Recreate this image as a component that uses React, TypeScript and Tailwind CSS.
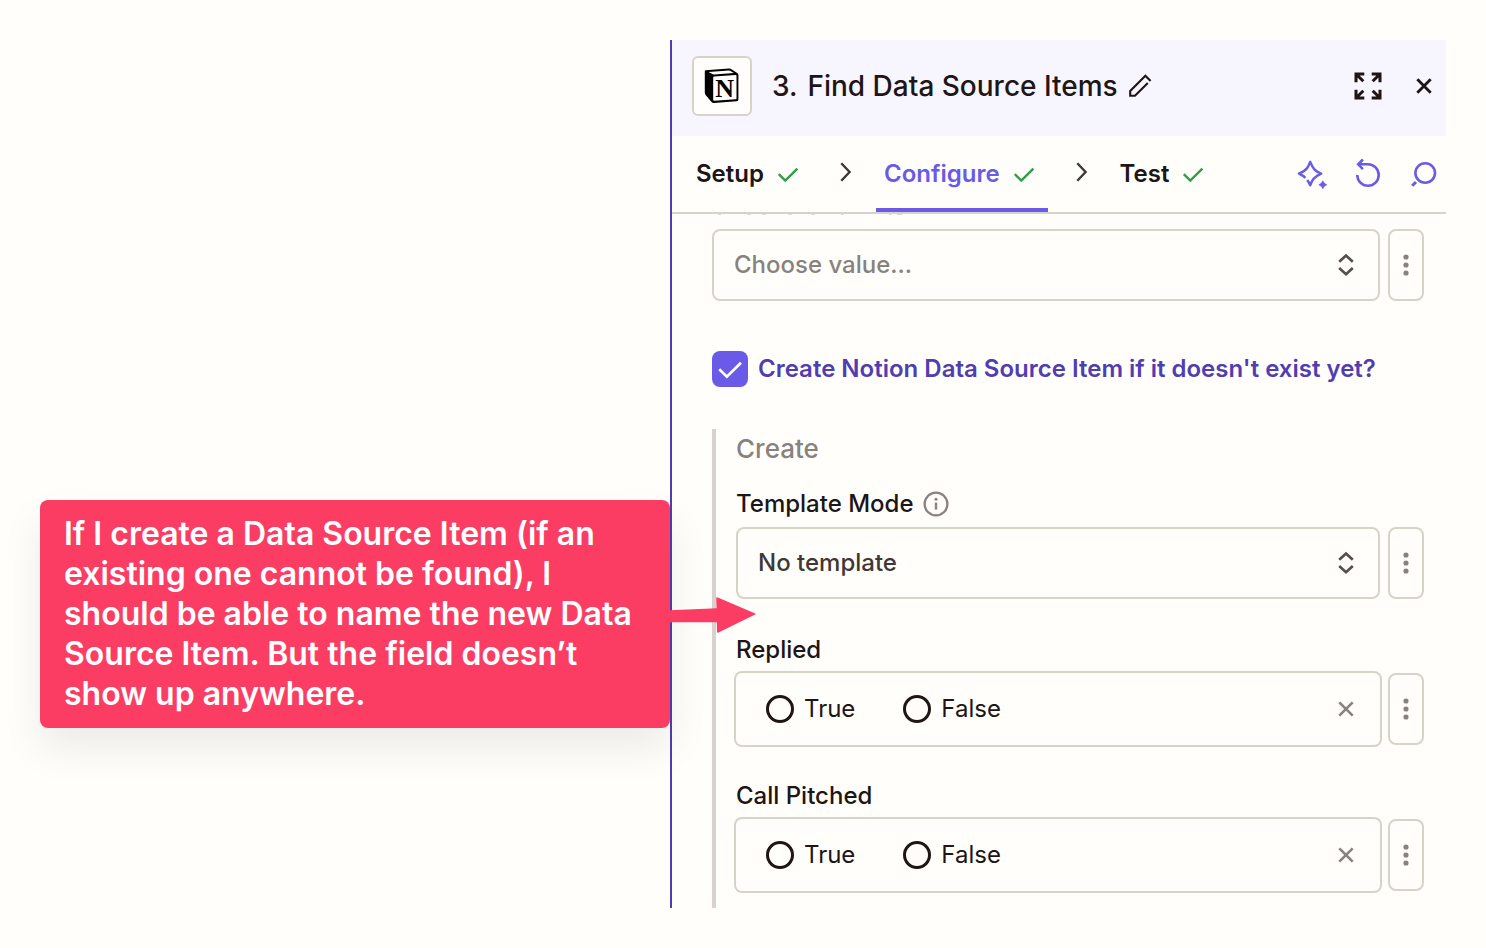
import type { ReactNode } from "react";

function NotionLogo() {
  return (
    <svg viewBox="0 0 36 36" className="size-9" aria-hidden="true">
      <path
        d="M1.6 2.3 L25 .6 Q26.6 .5 27.8 1.4 L33.6 5.3 Q34.4 5.9 34.4 7 V31.4 Q34.4 33.1 32.7 33.2 L10 34.9 Q8.3 35 7.3 33.7 L1.6 26.9 Q.8 25.8 .8 24.6 V3.4 Q.8 2.4 1.6 2.3 Z"
        fill="#000"
      />
      <path d="M4.6 4 L24.8 2.5 Q25.8 2.4 26.5 2.9 L29.8 5 L10.3 6.4 Q9 6.5 8 5.8 Z" fill="#fffefb" />
      <path d="M9.2 9.6 Q9.2 8.6 10.2 8.5 L31.5 7.1 Q32.5 7 32.5 8 V30.3 Q32.5 31.2 31.6 31.3 L10.3 32.7 Q9.2 32.7 9.2 31.7 Z" fill="#fffefb" />
      <text x="20.6" y="29" textAnchor="middle" fontFamily="Liberation Serif, serif" fontWeight="700" fontSize="26" fill="#000">
        N
      </text>
    </svg>
  );
}

function PencilIcon() {
  return (
    <svg viewBox="0 0 24 24" className="size-6" fill="none" stroke="#201515" strokeWidth="2.1" aria-hidden="true">
      <path d="M19.8 8.9 L7 21.7 H2.2 V16.9 L17.4 1.8 L22.6 7" />
    </svg>
  );
}

function ExpandIcon() {
  return (
    <svg viewBox="0 0 28 28" className="size-7" fill="none" stroke="#201515" strokeWidth="3" aria-hidden="true">
      <path d="M10.3 2 H2 V10.3 M2 2 L9.3 9.3" />
      <path d="M17.7 2 H26 V10.3 M26 2 L18.7 9.3" />
      <path d="M10.3 26 H2 V17.7 M2 26 L9.3 18.7" />
      <path d="M17.7 26 H26 V17.7 M26 26 L18.7 18.7" />
    </svg>
  );
}

function CloseIcon({ className }: { className: string }) {
  return (
    <svg viewBox="0 0 16 16" className={className} fill="none" stroke="currentColor" aria-hidden="true">
      <path d="M1.3 1.3 L14.7 14.7 M14.7 1.3 L1.3 14.7" />
    </svg>
  );
}

function CheckIcon({ className }: { className: string }) {
  return (
    <svg viewBox="0 0 24 24" className={className} fill="none" stroke="currentColor" aria-hidden="true">
      <path d="M2.8 12.2 L9.3 18.6 L21.4 6.6" />
    </svg>
  );
}

function StepArrow() {
  return (
    <div className="flex w-16 items-center justify-center pl-1">
      <svg viewBox="0 0 12 20" className="mb-1 h-5 w-3" fill="none" stroke="#413735" strokeWidth="2.4" aria-hidden="true">
        <path d="M1.3 1.2 L9.6 10 L1.3 18.8" />
      </svg>
    </div>
  );
}

function SparkleIcon() {
  return (
    <svg viewBox="0 0 32 32" className="size-8" fill="none" stroke="#695be8" strokeWidth="2.5" strokeLinejoin="round" aria-hidden="true">
      <path d="M9.4 19.9 C8.3 18.6 6.4 17.2 3 15.6 C7.2 13.9 9.6 12.2 11.2 10 C12.5 8.2 13.2 6.4 14.2 3.9 C15.6 7.4 16.8 9.7 18.6 11.6 C20.3 13.4 22.4 14.5 25.2 15.6 C21.6 17.2 19.2 18.8 17.4 21 C16 22.8 15.1 24.8 14.2 27.2 C13.2 25 12.4 23.6 11.2 22" />
      <path d="M26.8 22.8 Q27.8 25.7 30.8 26.8 Q27.8 27.9 26.8 30.8 Q25.8 27.9 22.8 26.8 Q25.8 25.7 26.8 22.8 Z" fill="#695be8" strokeWidth="0.6" />
    </svg>
  );
}

function UndoIcon() {
  return (
    <svg viewBox="0 0 32 32" className="size-8" fill="none" stroke="#695be8" strokeWidth="2.6" aria-hidden="true">
      <path d="M5.3 17 A10.7 10.7 0 1 0 16 6.3 H6.4" />
      <path d="M10.9 1.5 L6.2 6.3 L10.9 11.1" />
    </svg>
  );
}

function SearchIcon() {
  return (
    <svg viewBox="0 0 32 32" className="size-8" fill="none" stroke="#695be8" strokeWidth="2.6" aria-hidden="true">
      <circle cx="17.2" cy="15" r="9.8" />
      <path d="M8 24 L4.2 27.8" strokeWidth="3" />
    </svg>
  );
}

function InfoIcon() {
  return (
    <svg viewBox="0 0 26 26" className="size-[26px]" fill="none" stroke="#88827e" strokeWidth="2.3" aria-hidden="true">
      <circle cx="13" cy="13" r="11.4" />
      <path d="M13 11.6 V18.6" strokeWidth="2.4" />
      <circle cx="13" cy="8.2" r="1.5" fill="#88827e" stroke="none" />
    </svg>
  );
}

function SortIcon() {
  return (
    <svg viewBox="0 0 24 24" className="pointer-events-none absolute top-6 right-[22px] size-6" fill="none" stroke="#574e4c" strokeWidth="2.7" aria-hidden="true">
      <path d="M5.2 8.8 L12 2.6 L18.8 8.8 M5.2 15 L12 21.2 L18.8 15" />
    </svg>
  );
}

function MoreButton() {
  return (
    <button type="button" aria-label="More options" className="flex h-[72px] w-9 shrink-0 items-center justify-center rounded-lg border-2 border-[#d7d3c9]">
      <svg viewBox="0 0 6 22" className="h-[22px] w-1.5" fill="#88827e" aria-hidden="true">
        <circle cx="3" cy="3" r="2.6" />
        <circle cx="3" cy="11" r="2.6" />
        <circle cx="3" cy="19" r="2.6" />
      </svg>
    </button>
  );
}

function SelectRow({ id, label, value, tone }: { id: string; label?: string; value: string; tone: string }) {
  return (
    <div className="flex gap-2">
      <div className="relative min-w-0 flex-1">
        <select id={id} aria-label={label} className={`h-[72px] w-full appearance-none rounded-lg border-2 border-[#d7d3c9] bg-transparent px-5 font-medium ${tone}`}>
          <option>{value}</option>
        </select>
        <SortIcon />
      </div>
      <MoreButton />
    </div>
  );
}

function Radio({ name, label }: { name: string; label: string }) {
  return (
    <label className="flex items-center gap-2.5">
      <input type="radio" name={name} className="size-7 appearance-none rounded-full border-3 border-[#201515] checked:border-8" />
      <span className="text-[#201515]">{label}</span>
    </label>
  );
}

function BooleanField({ name, label }: { name: string; label: string }) {
  return (
    <fieldset className="mt-[34px]">
      <legend className="h-10 pt-px leading-8 font-medium text-[#201515]">{label}</legend>
      <div className="flex gap-2">
        <div className="flex h-[72px] min-w-0 flex-1 items-center gap-12 rounded-md pr-[18px] pl-[30px] ring-2 ring-[#d7d3c9]">
          <Radio name={name} label="True" />
          <Radio name={name} label="False" />
          <button type="button" aria-label={`Clear ${label}`} className="ml-auto flex size-8 items-center justify-center text-[#88827e]">
            <CloseIcon className="size-4 stroke-[2.6]" />
          </button>
        </div>
        <MoreButton />
      </div>
    </fieldset>
  );
}

function Tab({ active, children }: { active?: boolean; children: ReactNode }) {
  return (
    <button
      type="button"
      className={
        active
          ? "flex items-center gap-3 border-y-4 border-t-transparent border-b-[#695be8] pr-3 pl-2 font-semibold text-[#695be8]"
          : "flex items-center gap-3 border-y-4 border-transparent pr-3 pl-2 font-semibold text-[#201515]"
      }
    >
      {children}
      <CheckIcon className="size-6 stroke-[2.4] text-[#2f9e44]" />
    </button>
  );
}

export default function App() {
  return (
    <main className="flex min-h-screen bg-[#fffefb] p-10 font-['Inter',sans-serif] text-[24px] leading-8">
      <div className="w-[630px] shrink-0">
        <aside className="relative z-10 mt-[460px] rounded-lg bg-[#fc3d63] py-[14px] pr-4 pl-6 text-[32px] leading-10 font-semibold text-white shadow-[0_20px_40px_rgba(0,0,0,0.08)]">
          <p>
            If I create a Data Source Item (if an existing one cannot be found), I should be able to name the new Data Source Item. But the field doesn’t show up anywhere.
          </p>
          <svg viewBox="0 0 86 36" className="absolute top-[97px] left-full h-9 w-[86px]" fill="#fc3d63" aria-hidden="true">
            <path d="M0 13.2 L46.5 11.2 L46.2 1 Q46.3 0 47.3 .3 L85.2 16.6 Q86 17 85.2 17.5 L48 35.8 Q47 36 47 35 L46.8 25.2 L0 25.2 Z" />
          </svg>
        </aside>
      </div>

      <section className="min-w-0 flex-1 self-start border-l-2 border-[#503eb0]">
        <header className="flex h-24 items-center bg-[#f7f5fd] pr-1.5 pb-1 pl-5">
          <div className="flex size-[60px] items-center justify-center rounded-md border-2 border-[#d7d3c9] bg-[#fffefb]">
            <NotionLogo />
          </div>
          <h1 className="ml-5 flex gap-[10px] text-[28px] leading-9 font-medium text-[#201515]">
            <span>3.</span>
            <span>Find Data Source Items</span>
          </h1>
          <button type="button" aria-label="Rename step" className="ml-2.5">
            <PencilIcon />
          </button>
          <button type="button" aria-label="Expand panel" className="ml-auto flex size-8 items-center justify-center">
            <ExpandIcon />
          </button>
          <button type="button" aria-label="Close panel" className="ml-6 flex size-8 items-center justify-center text-[#201515]">
            <CloseIcon className="size-4 stroke-[2.8]" />
          </button>
        </header>

        <nav className="flex h-[78px] border-b-2 border-[#d7d3c9] pr-1.5 pl-4">
          <Tab>Setup</Tab>
          <StepArrow />
          <Tab active>Configure</Tab>
          <StepArrow />
          <Tab>Test</Tab>
          <div className="ml-auto flex items-center gap-6">
            <button type="button" aria-label="Ask AI">
              <SparkleIcon />
            </button>
            <button type="button" aria-label="Undo">
              <UndoIcon />
            </button>
            <button type="button" aria-label="Search">
              <SearchIcon />
            </button>
          </div>
        </nav>

        <div className="pr-[22px] pl-10">
          <svg viewBox="0 0 200 15" className="h-[15px] w-[200px]" stroke="#dcd9d2" aria-hidden="true">
            <path d="M6 .5 h3 M35 .5 h4 M50 .5 h4 M76 .5 h4 M99 .5 h4 M129 .5 h3 M177 .5 h3 M185 .5 h5" />
          </svg>
          <SelectRow id="value" label="Value" value="Choose value..." tone="text-[#88827e]" />

          <label className="mt-[50px] flex items-center gap-2.5">
            <span className="grid size-9 shrink-0 place-items-center">
              <input type="checkbox" defaultChecked className="col-start-1 row-start-1 size-9 appearance-none rounded-lg bg-[#695be8]" />
              <CheckIcon className="pointer-events-none col-start-1 row-start-1 size-7 stroke-[2.3] text-white" />
            </span>
            <span className="font-semibold text-[#503eb0]">Create Notion Data Source Item if it doesn't exist yet?</span>
          </label>

          <div className="mt-[42px] border-l-4 border-[#d9d1cb] pt-1 pb-[17px] pl-5">
            <h2 className="text-[26px] leading-8 font-medium text-[#88827e]">Create</h2>
            <div className="mt-[22px] flex h-10 items-center gap-2.5 pb-1.5">
              <label htmlFor="template-mode" className="font-medium text-[#201515]">
                Template Mode
              </label>
              <InfoIcon />
            </div>
            <SelectRow id="template-mode" value="No template" tone="text-[#413735]" />
            <BooleanField name="replied" label="Replied" />
            <BooleanField name="call-pitched" label="Call Pitched" />
          </div>
        </div>
      </section>
    </main>
  );
}
